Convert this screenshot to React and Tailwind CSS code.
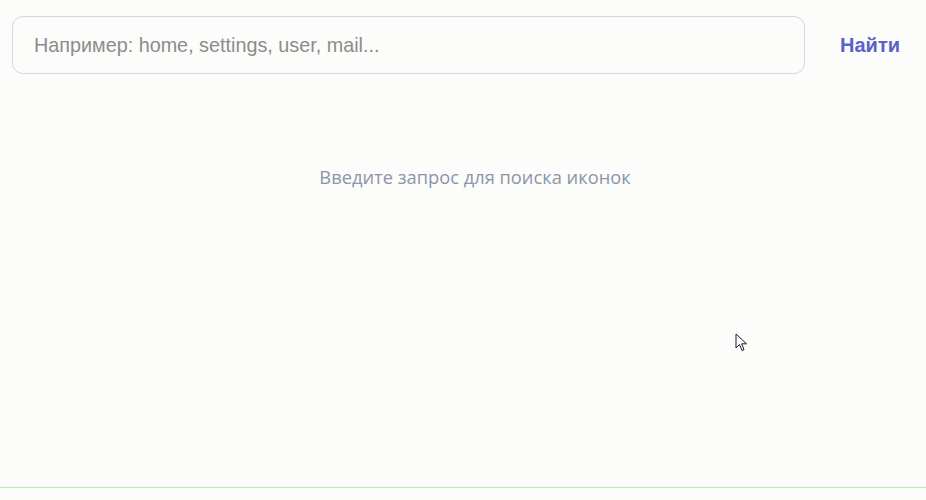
import React, { useState } from 'react';

function Cursor() {
  return (
    <svg
      className="absolute left-[735px] top-[333px] pointer-events-none"
      width="14"
      height="20"
      viewBox="0 0 14 20"
    >
      <path
        d="M1 1 L1 15 L4.5 11.5 L7 17.5 L9 16.6 L6.6 10.8 L11.5 10.8 Z"
        fill="#ffffff"
        stroke="#1a1a2a"
        strokeWidth="1"
        strokeLinejoin="round"
      />
    </svg>
  );
}

export default function App() {
  const [query, setQuery] = useState('');

  return (
    <div className="relative w-[926px] h-[500px] bg-[#fcfcfb] overflow-hidden font-['Liberation_Sans',Arial,sans-serif]">
      <div className="h-[488px] border-b border-[#b6eab6] flex flex-col">
        {/* Search bar */}
        <div className="flex items-center gap-4 pl-3 pr-[7px] pt-4">
          <input
            value={query}
            onChange={(e) => setQuery(e.target.value)}
            placeholder="Например: home, settings, user, mail..."
            className="flex-1 h-[58px] rounded-[11px] border border-[#d3d6e4] bg-transparent px-[21px] text-[19.8px] text-[#555] placeholder:text-[#8c8c8c] outline-none"
          />
          <button className="w-[98px] h-[58px] text-[20px] font-bold text-[#5a62c8]">
            Найти
          </button>
        </div>

        {/* Empty state */}
        <div className="flex justify-center pl-6 pt-[89px]">
          <p className="text-[18.3px] text-[#8b95a9] font-['Open_Sans',sans-serif]">
            Введите запрос для поиска иконок
          </p>
        </div>
      </div>
      <Cursor />
    </div>
  );
}
